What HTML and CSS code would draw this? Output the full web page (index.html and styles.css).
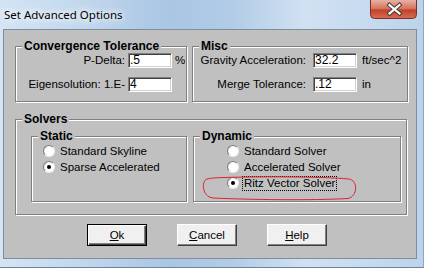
FILE: index.html
```html
<!DOCTYPE html>
<html>
<head>
<meta charset="utf-8">
<link rel="stylesheet" href="styles.css">
</head>
<body>
<div class="window">
  <div class="titlebar">
    <span class="title">Set Advanced Options</span>
    <div class="close">
      <svg width="47" height="19" viewBox="0 0 47 19">
        <defs>
          <linearGradient id="cg" x1="0" y1="0" x2="0" y2="1">
            <stop offset="0" stop-color="#e9b0a3"/>
            <stop offset="0.45" stop-color="#d5775f"/>
            <stop offset="0.55" stop-color="#c2412b"/>
            <stop offset="1" stop-color="#d66e52"/>
          </linearGradient>
        </defs>
        <path d="M0.5,0 V14.5 Q0.5,18.5 4.5,18.5 H42.5 Q46.5,18.5 46.5,14.5 V0" fill="url(#cg)" stroke="#7a3025"/>
        <path d="M19.5,5 L29.5,13.5 M29.5,5 L19.5,13.5" stroke="#4a3a38" stroke-width="4.2" stroke-linecap="square"/>
        <path d="M19.5,5 L29.5,13.5 M29.5,5 L19.5,13.5" stroke="#ffffff" stroke-width="2.2" stroke-linecap="square"/>
      </svg>
    </div>
  </div>
  <div class="client">
    <div class="top-row">
      <div class="group conv">
        <span class="legend">Convergence Tolerance</span>
        <div class="fields conv-fields">
          <span class="label">P-Delta:</span><span class="input">.5</span><span class="unit">%</span>
          <span class="label">Eigensolution: 1.E-</span><span class="input">4</span><span class="unit"></span>
        </div>
      </div>
      <div class="group misc">
        <span class="legend">Misc</span>
        <div class="fields misc-fields">
          <span class="label">Gravity Acceleration:</span><span class="input">32.2</span><span class="unit">ft/sec^2</span>
          <span class="label">Merge Tolerance:</span><span class="input">.12</span><span class="unit">in</span>
        </div>
      </div>
    </div>
    <div class="group solvers">
      <span class="legend">Solvers</span>
      <div class="solver-row">
        <div class="group sub static">
          <span class="legend">Static</span>
          <div class="radios">
            <div class="radio-row"><span class="radio"></span><span class="rlabel">Standard Skyline</span></div>
            <div class="radio-row"><span class="radio checked"></span><span class="rlabel">Sparse Accelerated</span></div>
          </div>
        </div>
        <div class="group sub dynamic">
          <span class="legend">Dynamic</span>
          <div class="radios">
            <div class="radio-row"><span class="radio"></span><span class="rlabel">Standard Solver</span></div>
            <div class="radio-row"><span class="radio"></span><span class="rlabel">Accelerated Solver</span></div>
            <div class="radio-row"><span class="radio checked"></span><span class="rlabel focus">Ritz Vector Solver</span></div>
          </div>
          <svg class="mark" width="158" height="25" viewBox="0 0 158 25">
            <path d="M22,1.5 C60,0.5 120,0.5 148,3 C157,4.5 157,20 147,22.5 C110,24.5 50,23.8 12,22 C1,21 0,5 6,3 C10,2 16,1.7 22,1.5 Z" fill="none" stroke="#e2222a" stroke-width="1"/>
          </svg>
        </div>
      </div>
    </div>
    <div class="buttons">
      <div class="btn default"><span><u>O</u>k</span></div>
      <div class="btn"><span><u>C</u>ancel</span></div>
      <div class="btn"><span><u>H</u>elp</span></div>
    </div>
  </div>
</div>
</body>
</html>
```

FILE: styles.css
```css
* { box-sizing: border-box; }
html, body { margin: 0; padding: 0; }
body {
  width: 424px;
  height: 268px;
  overflow: hidden;
  font-family: "Liberation Sans", Arial, sans-serif;
  font-size: 11.5px;
  color: #000;
  background: #bcd2ea;
}
.window {
  width: 424px;
  height: 268px;
  padding: 0 6px 0 3px;
  display: flex;
  flex-direction: column;
  background: linear-gradient(90deg, #d4e4f4 0%, #c3d8ee 18%, #a9c6e3 40%, #b2cce7 55%, #d0e1f2 72%, #c6daef 88%, #bcd3eb 100%);
  border-right: 1px solid #8ea6bf;
  border-bottom: 1px solid #6f8297;
}
.titlebar {
  height: 29px;
  display: flex;
  justify-content: space-between;
  align-items: flex-start;
  flex: none;
}
.title {
  font-family: "Noto Sans", "Open Sans", sans-serif;
  font-size: 11.5px;
  line-height: 14px;
  padding: 8px 0 0 1px;
  color: #000;
  text-shadow: 0 0 6px #fff, 0 0 10px #fff, 0 0 14px #fff;
}
.close { width: 47px; height: 19px; }
.close svg { display: block; }
.client {
  height: 230px;
  flex: none;
  background: #c0c0c0;
  border: 1px solid #7f8d9c;
  padding: 16px 9px 0 11px;
}
.top-row {
  display: grid;
  grid-template-columns: 172px 216px;
  column-gap: 5px;
}
.group {
  border: 1px solid #808080;
  box-shadow: inset 1px 1px 0 #fff, 1px 1px 0 #fff;
}
.legend {
  display: block;
  width: max-content;
  margin: -8px 0 0 6px;
  padding: 0 2px;
  background: #c0c0c0;
  font-weight: bold;
  font-size: 12px;
  line-height: 14px;
}
.conv, .misc { height: 56px; }
.fields {
  display: grid;
  grid-auto-rows: 15px;
  row-gap: 9px;
  align-items: center;
}
.conv-fields { grid-template-columns: 109px 44px auto; column-gap: 3px; }
.misc-fields { grid-template-columns: 115px 44px auto; column-gap: 5px; }
.misc-fields .label { padding-right: 2px; }
.label { text-align: right; white-space: nowrap; line-height: 15px; }
.unit { white-space: nowrap; line-height: 15px; }
.input {
  height: 15px;
  background: #fff;
  border: 1px solid;
  border-color: #808080 #fff #fff #808080;
  box-shadow: inset 1px 1px 0 #404040, inset -1px -1px 0 #d4d0c8;
  padding-left: 1px;
  font-size: 12px;
  line-height: 13px;
}
.solvers {
  margin-top: 17px;
  height: 96px;
}
.solver-row {
  display: flex;
  gap: 6px;
  margin-top: 10px;
  padding-left: 15px;
}
.sub { height: 66px; position: relative; }
.static { width: 156px; }
.dynamic { width: 208px; }
.static .radios { padding-left: 11px; }
.dynamic .radios { padding-left: 33px; }
.radio-row {
  height: 16px;
  display: flex;
  align-items: center;
  gap: 5px;
}
.radio {
  width: 12px;
  height: 12px;
  border-radius: 50%;
  flex: none;
  background: radial-gradient(circle at 60% 60%, #ffffff 0%, #ffffff 45%, #e4e4e4 100%);
  border: 1px solid;
  border-color: #7d7d7d #f2f2f2 #f2f2f2 #7d7d7d;
  display: flex;
  align-items: center;
  justify-content: center;
}
.radio.checked::after {
  content: "";
  width: 4px;
  height: 4px;
  border-radius: 50%;
  background: #000;
}
.rlabel { white-space: nowrap; line-height: 13px; }
.focus {
  outline: 1px dotted #000;
  outline-offset: 0;
  padding: 0 1px;
  margin-left: -1px;
}
.mark {
  position: absolute;
  left: 7px;
  top: 39px;
}
.buttons {
  display: flex;
  gap: 30px;
  margin: 9px 0 0 72px;
}
.btn {
  width: 60px;
  height: 22px;
  background: #f0f0f0;
  border: 1px solid;
  border-color: #fff #404040 #404040 #fff;
  box-shadow: inset -1px -1px 0 #808080;
  display: flex;
  align-items: center;
  justify-content: center;
  font-size: 11.5px;
}
.btn.default {
  border: 1px solid #000;
  box-shadow: inset 1px 1px 0 #fff, inset -1px -1px 0 #404040, inset -2px -2px 0 #808080;
}
```
